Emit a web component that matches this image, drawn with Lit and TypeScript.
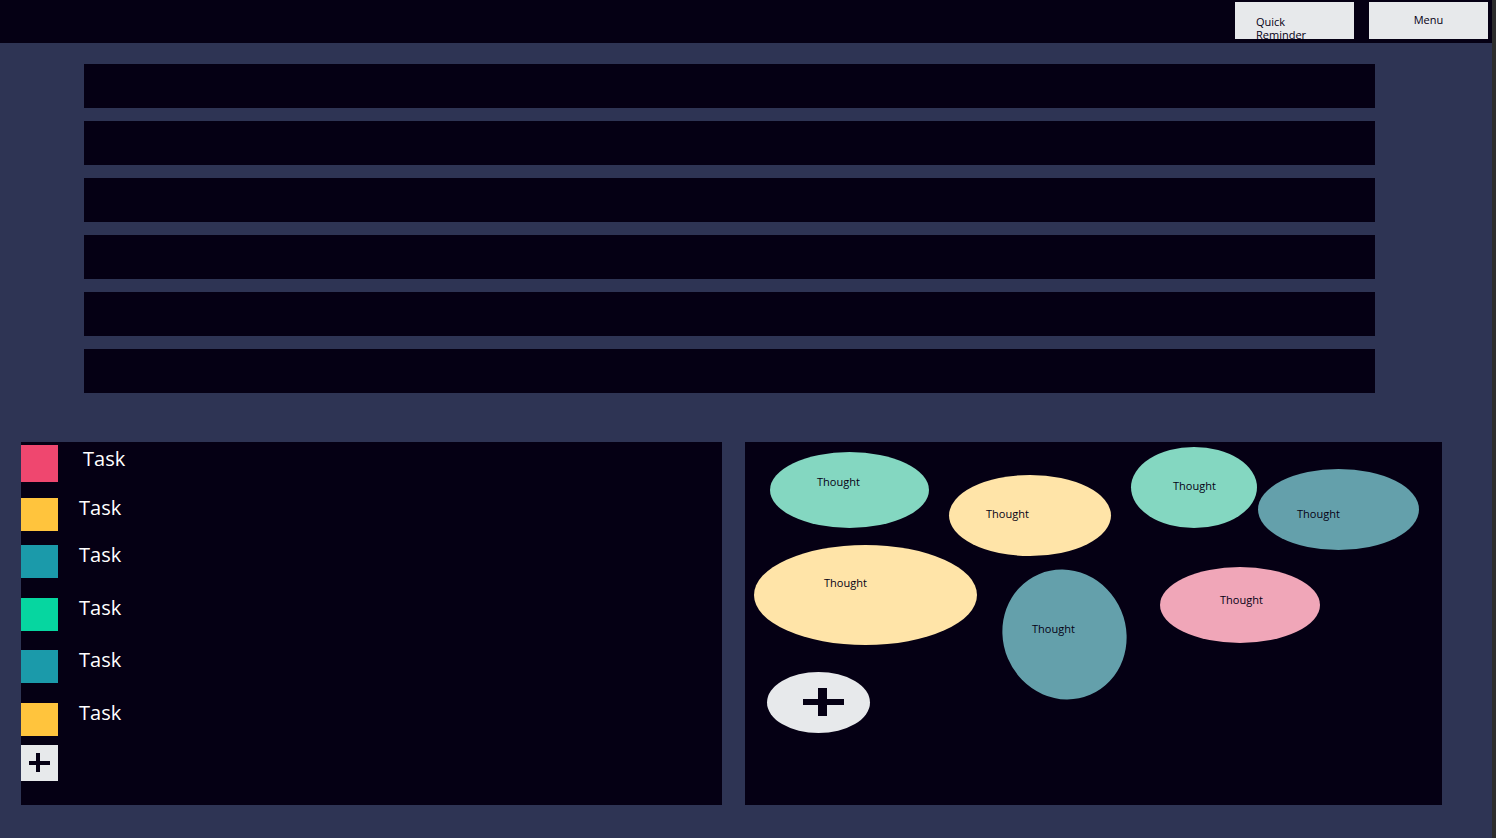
import { LitElement, html, css } from "lit";
import { customElement } from "lit/decorators.js";
import { classMap } from "lit/directives/class-map.js";
import { styleMap } from "lit/directives/style-map.js";

interface Task {
  label: string;
  tone: string;
  lead?: boolean;
}

interface Thought {
  label: string;
  tone: string;
  x: number;
  y: number;
  w: number;
  h: number;
  labelX: number;
  labelY: number;
  tilted?: boolean;
}

const TASKS: Task[] = [
  { label: "Task", tone: "pink", lead: true },
  { label: "Task", tone: "yellow" },
  { label: "Task", tone: "teal" },
  { label: "Task", tone: "green" },
  { label: "Task", tone: "teal" },
  { label: "Task", tone: "yellow" },
];

const THOUGHTS: Thought[] = [
  { label: "Thought", tone: "mint", x: 25, y: 10, w: 159, h: 76, labelX: 47, labelY: 23 },
  { label: "Thought", tone: "cream", x: 204, y: 33, w: 162, h: 81, labelX: 37, labelY: 32 },
  { label: "Thought", tone: "mint", x: 386, y: 5, w: 126, h: 81, labelX: 42, labelY: 32 },
  { label: "Thought", tone: "sea", x: 513, y: 27, w: 161, h: 81, labelX: 39, labelY: 38 },
  { label: "Thought", tone: "cream", x: 9, y: 103, w: 223, h: 100, labelX: 70, labelY: 31 },
  { label: "Thought", tone: "sea", x: 258, y: 127, w: 123, h: 131, labelX: 29, labelY: 53, tilted: true },
  { label: "Thought", tone: "rose", x: 415, y: 125, w: 160, h: 76, labelX: 60, labelY: 26 },
];

@customElement("app-root")
export class AppRoot extends LitElement {
  static styles = css`
    :host {
      display: flex;
      flex-direction: column;
      box-sizing: border-box;
      min-height: 100vh;
      border-right: 4px solid #2d2d2d;
      background: #2e3454;
      color: #050014;
      font-family: "Open Sans", "Noto Sans", sans-serif;
      font-size: 11px;
      line-height: 13px;
    }
    button {
      margin: 0;
      border: 0;
      padding: 0;
      background: #e7e9eb;
      color: inherit;
      font: inherit;
      cursor: pointer;
    }
    ul {
      margin: 0;
      padding: 0;
      list-style: none;
    }
    .topbar {
      display: flex;
      justify-content: flex-end;
      gap: 15px;
      padding: 2px 4px 4px;
      background: #050014;
    }
    .action {
      display: flex;
      align-items: center;
      justify-content: center;
      width: 119px;
      height: 37px;
      padding-bottom: 2px;
      overflow: hidden;
    }
    .action.reminder {
      align-items: flex-start;
      justify-content: flex-start;
      padding: 13px 32px 0 21px;
      text-align: left;
    }
    .rows {
      display: flex;
      flex-direction: column;
      gap: 13px;
      padding: 21px 117px 0 84px;
    }
    .row {
      height: 44px;
      background: #050014;
    }
    .panels {
      flex: 1;
      display: grid;
      grid-template-columns: 701fr 697fr;
      gap: 23px;
      padding: 49px 50px 33px 21px;
    }
    .panel {
      background: #050014;
    }
    .tasks {
      display: grid;
      grid-template-rows: 53px 47px 53px 52px 53px 42px 36px;
      align-content: start;
      padding-top: 3px;
    }
    .task {
      display: flex;
      align-items: flex-start;
      gap: 21px;
      color: #ffffff;
      font-size: 20px;
      line-height: 20px;
    }
    .swatch {
      width: 37px;
      height: 33px;
    }
    .task.lead {
      gap: 25px;
    }
    .task.lead .swatch {
      height: 37px;
    }
    .task.lead .name {
      padding-top: 4px;
    }
    .add-task {
      display: block;
      width: 37px;
      height: 36px;
    }
    .glyph {
      display: block;
      width: 100%;
      height: 100%;
      fill: #050014;
    }
    .board {
      position: relative;
      min-height: 363px;
    }
    .thought {
      position: absolute;
      box-sizing: border-box;
    }
    .shape {
      position: absolute;
      inset: 0;
      border-radius: 50%;
    }
    .tilted .shape {
      transform: rotate(-23deg);
    }
    .caption {
      position: relative;
    }
    .add-thought {
      position: absolute;
      left: 22px;
      top: 230px;
      width: 103px;
      height: 61px;
      border-radius: 50%;
    }
    .pink { background: #ef476f; }
    .yellow { background: #ffc43d; }
    .teal { background: #1b9aaa; }
    .green { background: #06d6a0; }
    .mint { background: #84d7c1; }
    .cream { background: #ffe4a8; }
    .sea { background: #64a0ab; }
    .rose { background: #f0a6b8; }
  `;

  private renderTask(task: Task) {
    return html`<li class=${classMap({ task: true, lead: !!task.lead })}>
      <span class="swatch ${task.tone}"></span><span class="name">${task.label}</span>
    </li>`;
  }

  private renderThought(t: Thought) {
    const box = {
      left: `${t.x}px`,
      top: `${t.y}px`,
      width: `${t.w}px`,
      height: `${t.h}px`,
      padding: `${t.labelY}px 0 0 ${t.labelX}px`,
    };
    return html`<li class=${classMap({ thought: true, tilted: !!t.tilted })} style=${styleMap(box)}>
      <span class="shape ${t.tone}"></span><span class="caption">${t.label}</span>
    </li>`;
  }

  render() {
    return html`
      <header class="topbar">
        <button class="action reminder" type="button">Quick Reminder</button>
        <button class="action" type="button">Menu</button>
      </header>
      <section class="rows">
        ${[1, 2, 3, 4, 5, 6].map(() => html`<div class="row"></div>`)}
      </section>
      <main class="panels">
        <section class="panel">
          <ul class="tasks">
            ${TASKS.map((task) => this.renderTask(task))}
            <li>
              <button class="add-task" type="button" aria-label="Add task">
                <svg class="glyph" viewBox="0 0 37 36" aria-hidden="true">
                  <path d="M15 8h4v8h10v4H19v7h-4v-7H8v-4h7z"></path>
                </svg>
              </button>
            </li>
          </ul>
        </section>
        <section class="panel board">
          <ul>
            ${THOUGHTS.map((t) => this.renderThought(t))}
          </ul>
          <button class="add-thought" type="button" aria-label="Add thought">
            <svg class="glyph" viewBox="0 0 103 61" aria-hidden="true">
              <path d="M51 16h9v11h17v6H60v11h-9V33H36v-6h15z"></path>
            </svg>
          </button>
        </section>
      </main>
    `;
  }
}
